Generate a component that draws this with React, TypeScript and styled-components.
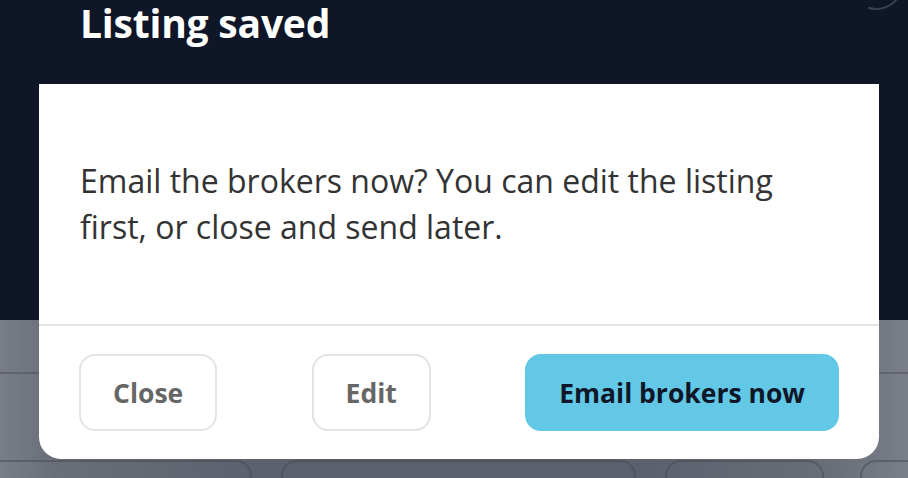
import * as React from 'react';
import styled, { createGlobalStyle } from 'styled-components';

const GlobalStyle = createGlobalStyle`
  html, body {
    margin: 0;
    padding: 0;
  }
  body {
    font-family: 'Open Sans', 'Noto Sans', sans-serif;
    overflow: hidden;
  }
`;

const Page = styled.div`
  position: relative;
  width: 908px;
  height: 478px;
  overflow: hidden;
  display: flex;
  flex-direction: column;
`;

const Header = styled.header`
  height: 320px;
  flex: 0 0 auto;
  background: #0e1628;
  padding: 0 80px;
  position: relative;
`;

const HeaderTitle = styled.h1`
  margin: 0;
  padding-top: 1px;
  color: #ffffff;
  font-size: 39px;
  font-weight: 700;
  line-height: 44px;
  letter-spacing: -0.2px;
`;

const CornerRing = styled.div`
  position: absolute;
  top: -46px;
  left: 848px;
  width: 52px;
  height: 52px;
  border-radius: 50%;
  border: 2px solid transparent;
  border-bottom-color: #3a4252;
  transform: rotate(-28deg);
`;

const Backdrop = styled.div`
  flex: 1 1 auto;
  background: linear-gradient(90deg, #797d88 0%, #6a6e79 6%, #5b606c 30%, #5b606c 70%, #6a6e79 92%, #7a7e89 100%);
  display: flex;
  flex-direction: column;
`;

const BackdropRow = styled.div`
  height: 52px;
  border-bottom: 2px solid rgba(70, 74, 86, 0.45);
`;

const ChipRow = styled.div`
  margin-top: 86px;
  display: flex;
  gap: 29px;
  margin-left: -38px;
`;

const Chip = styled.div<{ w: number; shift?: number }>`
  width: ${({ w }) => w}px;
  margin-left: ${({ shift }) => shift || 0}px;
  flex: 0 0 auto;
  height: 60px;
  box-sizing: border-box;
  border-radius: 16px;
  border: 2px solid rgba(70, 74, 86, 0.55);
`;

const Modal = styled.div`
  position: absolute;
  left: 39px;
  top: 84px;
  width: 840px;
  background: #ffffff;
  border-radius: 0 0 22px 22px;
  display: flex;
  flex-direction: column;
`;

const ModalBody = styled.div`
  height: 242px;
  box-sizing: border-box;
  padding: 74px 50px 0 41px;
  border-bottom: 2px solid #e4e4e4;
`;

const Message = styled.p`
  margin: 0;
  color: #333333;
  font-size: 32px;
  line-height: 46px;
`;

const ModalFooter = styled.div`
  display: flex;
  justify-content: space-between;
  align-items: center;
  padding: 28px 40px;
`;

const Button = styled.button<{ primary?: boolean }>`
  height: 77px;
  box-sizing: border-box;
  padding: 0 32px;
  border-radius: 16px;
  font-family: 'Open Sans', 'Noto Sans', sans-serif;
  font-size: 26.5px;
  font-weight: 700;
  cursor: pointer;
  border: 2px solid ${({ primary }) => (primary ? '#62c8e6' : '#e3e3e3')};
  background: ${({ primary }) => (primary ? '#62c8e6' : '#ffffff')};
  color: ${({ primary }) => (primary ? '#0e1628' : '#666666')};
`;

const App: React.FC = () => (
  <>
    <GlobalStyle />
    <Page>
      <Header>
        <HeaderTitle>Listing saved</HeaderTitle>
        <CornerRing />
      </Header>
      <Backdrop>
        <BackdropRow />
        <ChipRow>
          <Chip w={290} />
          <Chip w={355} />
          <Chip w={159} />
          <Chip w={120} shift={7} />
        </ChipRow>
      </Backdrop>
      <Modal>
        <ModalBody>
          <Message>
            Email the brokers now? You can edit the listing first, or close and send later.
          </Message>
        </ModalBody>
        <ModalFooter>
          <Button>Close</Button>
          <Button>Edit</Button>
          <Button primary>Email brokers now</Button>
        </ModalFooter>
      </Modal>
    </Page>
  </>
);

export default App;
